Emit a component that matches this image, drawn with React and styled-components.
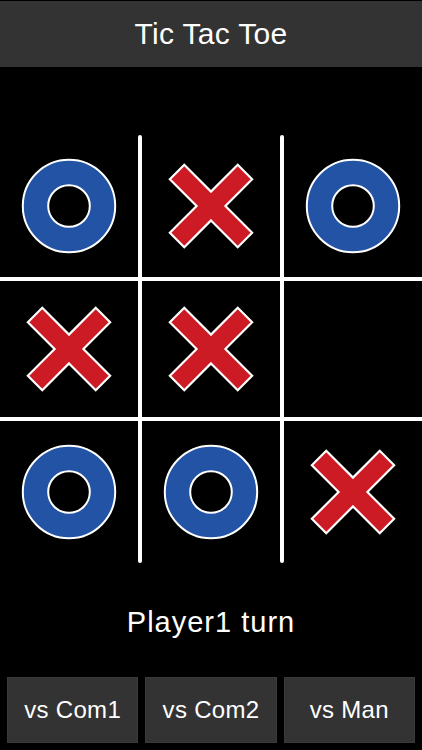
import React from "react";
import styled, { createGlobalStyle } from "styled-components";

const Global = createGlobalStyle`
  html, body { margin: 0; padding: 0; background: #000; }
  body { font-family: "Liberation Sans", Arial, sans-serif; }
`;

const Page = styled.div`
  width: 422px;
  height: 750px;
  background: #000;
  display: flex;
  flex-direction: column;
  overflow: hidden;
`;

const Header = styled.header`
  margin-top: 1px;
  height: 66px;
  background: #333333;
  color: #fff;
  display: flex;
  align-items: center;
  justify-content: center;
  font-size: 30px;
  letter-spacing: 0.3px;
`;

const Board = styled.div`
  margin-top: 68px;
  display: grid;
  grid-template-columns: 138px 4px 138px 4px 138px;
  grid-template-rows: 142px 4px 136px 4px 142px;
`;

const VLine = styled.div`
  grid-row: 1 / 6;
  grid-column: ${(p) => p.$col};
  background: #fff;
  border-radius: 2px;
`;

const HLine = styled.div`
  grid-column: 1 / 6;
  grid-row: ${(p) => p.$row};
  background: #fff;
`;

const Cell = styled.div`
  grid-row: ${(p) => p.$row};
  grid-column: ${(p) => p.$col};
  display: flex;
  align-items: center;
  justify-content: center;
`;

const Status = styled.div`
  margin-top: 41px;
  height: 36px;
  line-height: 36px;
  text-align: center;
  color: #fff;
  font-size: 29px;
  letter-spacing: 1px;
`;

const ButtonRow = styled.div`
  margin-top: 37px;
  display: flex;
  gap: 7px;
  padding: 0 7px;
`;

const ModeButton = styled.button`
  flex: 1;
  height: 66px;
  background: #333333;
  border: 1px solid #3a3a3a;
  color: #fff;
  font-family: "Liberation Sans", Arial, sans-serif;
  font-size: 24px;
  letter-spacing: 0.3px;
  padding: 0;
  display: flex;
  align-items: center;
  justify-content: center;
`;

const OMark = () => (
  <svg width="96" height="96" viewBox="-48 -48 96 96">
    <circle r="46.2" fill="#2353a4" stroke="#fff" strokeWidth="2" />
    <circle r="20.8" fill="#000" stroke="#fff" strokeWidth="2" />
  </svg>
);

const a = 48;
const h = 10.2;
const xPts = [
  [h, h], [a, h], [a, -h], [h, -h], [h, -a], [-h, -a],
  [-h, -h], [-a, -h], [-a, h], [-h, h], [-h, a], [h, a],
].map((p) => p.join(",")).join(" ");

const XMark = () => (
  <svg width="90" height="90" viewBox="-45 -45 90 90">
    <polygon
      points={xPts}
      transform="rotate(45)"
      fill="#cc1b24"
      stroke="#fff"
      strokeWidth="2.2"
      strokeLinejoin="miter"
    />
  </svg>
);

const board = [
  ["O", "X", "O"],
  ["X", "X", ""],
  ["O", "O", "X"],
];

export default function App() {
  return (
    <>
      <Global />
      <Page>
        <Header>Tic Tac Toe</Header>
        <Board>
          {board.map((row, r) =>
            row.map((v, c) => (
              <Cell key={`${r}-${c}`} $row={r * 2 + 1} $col={c * 2 + 1}>
                {v === "O" ? <OMark /> : v === "X" ? <XMark /> : null}
              </Cell>
            ))
          )}
          <HLine $row={2} />
          <HLine $row={4} />
          <VLine $col={2} />
          <VLine $col={4} />
        </Board>
        <Status>Player1 turn</Status>
        <ButtonRow>
          <ModeButton>vs Com1</ModeButton>
          <ModeButton>vs Com2</ModeButton>
          <ModeButton>vs Man</ModeButton>
        </ButtonRow>
      </Page>
    </>
  );
}
